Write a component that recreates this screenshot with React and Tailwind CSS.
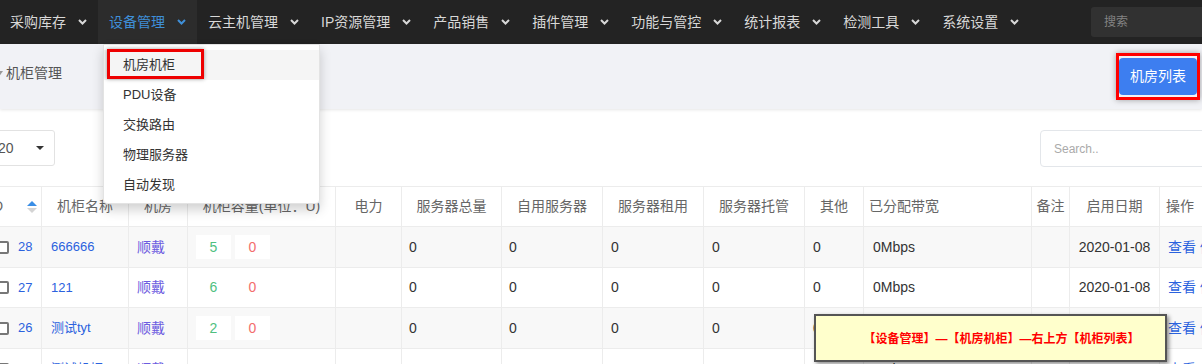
/**
 * Cabinet management page with top navigation, open "设备管理" dropdown,
 * cabinet table and a yellow hint label.
 */

const NAV_ITEMS = [
  '采购库存',
  '设备管理',
  '云主机管理',
  'IP资源管理',
  '产品销售',
  '插件管理',
  '功能与管控',
  '统计报表',
  '检测工具',
  '系统设置',
];

const MENU_ITEMS = ['机房机柜', 'PDU设备', '交换路由', '物理服务器', '自动发现'];

const GRID =
  'grid grid-cols-[56px_87px_59px_148px_66px_100px_101px_101px_101px_59px_168px_38px_90px_100px] w-[1273px] -ml-[14px]';

const CELL = 'flex items-center border-r border-[#ececec] overflow-hidden whitespace-nowrap';

const HEADERS = [
  '机柜名称',
  '机房',
  '机柜容量(单位：U)',
  '电力',
  '服务器总量',
  '自用服务器',
  '服务器租用',
  '服务器托管',
  '其他',
];

const ROWS = [
  { id: 28, name: '666666', used: 5, free: 0, striped: true, h: 'h-[41px]' },
  { id: 27, name: '121', used: 6, free: 0, striped: false, h: 'h-[40px]' },
  { id: 26, name: '测试tyt', used: 2, free: 0, striped: true, h: 'h-[41px]' },
  { id: 25, name: '测试机柜', used: 0, free: 0, striped: false, h: 'h-[41px]' },
];

function Chevron({ className = '' }) {
  return (
    <svg width="9" height="6" viewBox="0 0 9 6" className={className}>
      <path d="M1 1l3.5 3.5L8 1" fill="none" stroke="currentColor" strokeWidth="2" />
    </svg>
  );
}

function SortIcon() {
  return (
    <svg width="10" height="12" viewBox="0 0 10 12">
      <path d="M5 0L10 5H0Z" fill="#3a8ee6" />
      <path d="M0 7H10L5 12Z" fill="#d4d4d4" />
    </svg>
  );
}

function TopNav() {
  return (
    <nav className="flex items-center h-[44px] bg-[#232323]">
      <ul className="flex -ml-px">
        {NAV_ITEMS.map((label) => {
          const active = label === '设备管理';
          return (
            <li
              key={label}
              className={`flex items-center h-[44px] px-[11px] text-[14px] ${
                active ? 'bg-[#2c2c2c] text-[#3f8fd8]' : 'text-[#d8d8d8]'
              }`}
            >
              <span className="leading-[20px]">{label}</span>
              <Chevron className="ml-[12px]" />
            </li>
          );
        })}
      </ul>
      <div className="ml-auto -mr-[19px] w-[130px] h-[30px] rounded-[3px] bg-[#313131] flex items-center pl-[13px] text-[12px] text-[#838383]">
        搜索
      </div>
    </nav>
  );
}

function PageHeader() {
  return (
    <div className="relative z-[1] flex justify-between h-[65px] bg-[#f1f2f6] shadow-[0_1px_3px_rgba(0,0,0,0.1)]">
      <div className="flex items-center gap-[3px] -ml-[4px] mt-[19px] h-[20px] text-[14px] text-[#555]">
        <svg width="7" height="5" viewBox="0 0 7 5">
          <path d="M0 0H7L3.5 5Z" fill="#999" />
        </svg>
        <span className="leading-[20px]">机柜管理</span>
      </div>
      <div className="self-start mt-[9px] mr-[2px] border-[3px] border-[#f00] py-[2px] shadow-[0_0_6px_rgba(0,0,0,0.35)]">
        <button className="block h-[37px] w-[78px] rounded-[4px] bg-[#3d7ef0] text-white text-[14px]">
          机房列表
        </button>
      </div>
    </div>
  );
}

function DropdownMenu() {
  return (
    <div className="absolute left-[103px] top-[44px] z-20 w-[217px] bg-white border border-[#e3e3e3] rounded-b-[4px] shadow-[0_6px_12px_rgba(0,0,0,0.18)] pt-[5px] pb-[3px]">
      {MENU_ITEMS.map((item, i) => (
        <div
          key={item}
          className={`relative h-[30px] flex items-center pl-[19px] text-[13px] text-[#333] ${
            i === 0 ? 'bg-[#f5f5f5]' : ''
          }`}
        >
          {item}
          {i === 0 && (
            <div className="absolute left-[3px] -top-px w-[97px] h-[30px] border-[3px] border-[#ee0000] shadow-[0_0_4px_rgba(0,0,0,0.4)]" />
          )}
        </div>
      ))}
    </div>
  );
}

function CabinetTable() {
  return (
    <div>
      {/* Header */}
      <div className={`${GRID} h-[41px] border-t border-b border-[#ececec] text-[14px] text-[#666]`}>
        <div className={`${CELL} justify-between pl-[3px] pr-[4px]`}>
          <span>ID</span>
          <SortIcon />
        </div>
        {HEADERS.map((h) => (
          <div key={h} className={`${CELL} justify-center`}>
            {h}
          </div>
        ))}
        <div className={`${CELL} pl-[5px]`}>已分配带宽</div>
        <div className={`${CELL} justify-center`}>备注</div>
        <div className={`${CELL} justify-center`}>启用日期</div>
        <div className={`${CELL} pl-[6px]`}>操作</div>
      </div>

      {/* Rows */}
      {ROWS.map((r) => (
        <div
          key={r.id}
          className={`${GRID} ${r.h} border-b border-[#ececec] text-[14px] text-[#333] ${
            r.striped ? 'bg-[#f8f8f8]' : 'bg-white'
          }`}
        >
          <div className={`${CELL} pl-[10px]`}>
            <span className="w-[13px] h-[13px] border-2 border-[#777] rounded-[2px] bg-white shrink-0" />
            <span className="ml-[9px] text-[13px] text-[#2b62de]">{r.id}</span>
          </div>
          <div className={`${CELL} pl-[9px] text-[13px] text-[#2b62de]`}>{r.name}</div>
          <div className={`${CELL} pl-[8px] text-[#6c5ce0]`}>顺戴</div>
          <div className={`${CELL} pl-[8px] gap-[4px]`}>
            <span className="w-[35px] h-[24px] bg-white flex items-center justify-center text-[#4fbf7f]">
              {r.used}
            </span>
            <span className="w-[35px] h-[24px] bg-white flex items-center justify-center text-[#f36d6d]">
              {r.free}
            </span>
          </div>
          <div className={CELL} />
          <div className={`${CELL} pl-[7px]`}>0</div>
          <div className={`${CELL} pl-[7px]`}>0</div>
          <div className={`${CELL} pl-[8px]`}>0</div>
          <div className={`${CELL} pl-[8px]`}>0</div>
          <div className={`${CELL} pl-[8px]`}>0</div>
          <div className={`${CELL} pl-[9px]`}>0Mbps</div>
          <div className={CELL} />
          <div className={`${CELL} justify-center`}>2020-01-08</div>
          <div className={`${CELL} pl-[8px] text-[#2b62de]`}>查看 修改 删除</div>
        </div>
      ))}
    </div>
  );
}

export default function App() {
  return (
    <div className="relative w-[1202px] h-[364px] overflow-hidden bg-white text-[#333] font-['Liberation_Sans','Noto_Sans_CJK_SC',sans-serif]">
      <TopNav />
      <PageHeader />

      <div className="pt-[21px]">
        {/* Page size + search */}
        <div className="flex justify-between h-[37px] mb-[19px]">
          <div className="-ml-[15px] w-[70px] h-[36px] border border-[#e2e2e2] rounded-[3px] flex items-center justify-between pl-[12px] pr-[10px] text-[14px] text-[#555]">
            <span>20</span>
            <svg width="8" height="4" viewBox="0 0 8 4">
              <path d="M0 0H8L4 4Z" fill="#333" />
            </svg>
          </div>
          <div className="-mr-[38px] w-[200px] h-[37px] border border-[#e3e6ea] rounded-[4px] flex items-center pl-[13px] text-[12px] text-[#aaa]">
            Search..
          </div>
        </div>

        <CabinetTable />
      </div>

      <DropdownMenu />

      <div className="absolute left-[814px] top-[314px] z-30 w-[353px] h-[48px] bg-[#ffffcc] border-2 border-[#555] shadow-[2px_2px_4px_rgba(0,0,0,0.45)] flex items-center justify-center pt-[2px] pl-[22px] text-[12px] font-bold text-[#f00]">
        【设备管理】—【机房机柜】—右上方【机柜列表】
      </div>
    </div>
  );
}
